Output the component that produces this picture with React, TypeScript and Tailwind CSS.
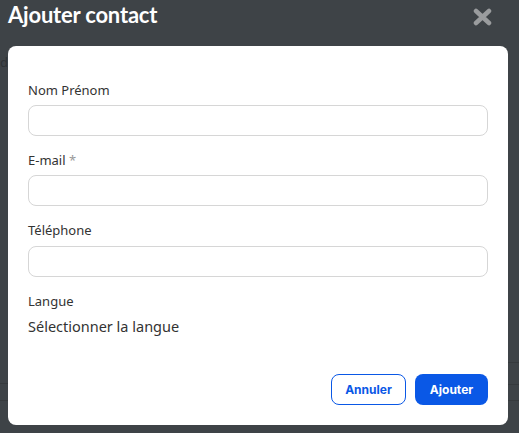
export default function App() {
  return (
    <div className="relative w-[519px] h-[433px] overflow-hidden bg-[#3e4347] font-['Noto_Sans',sans-serif]">
      {/* faint background behind overlay */}
      <div className="absolute left-0 top-[56px] text-[13px] text-[#2f3336] leading-none">de</div>
      <div className="absolute left-0 top-[383px] w-[8px] h-px bg-[#363a3d]" />
      <div className="absolute left-0 top-[400px] w-[8px] h-px bg-[#363a3d]" />
      <div className="absolute right-0 top-[362px] w-[11px] h-px bg-[#363a3d]" />
      <div className="absolute right-0 top-[384px] w-[11px] h-px bg-[#363a3d]" />
      <div className="absolute right-0 top-[400px] w-[11px] h-px bg-[#363a3d]" />

      {/* Header */}
      <div className="relative flex items-center justify-between pl-[8px] pr-[27px] h-[30px]">
        <h2 className="text-white text-[22px] font-bold tracking-[-0.2px] font-['Lato',sans-serif] leading-none">
          Ajouter contact
        </h2>
        <svg width="19" height="18" viewBox="0 0 19 18" className="mt-[3px]">
          <path d="M3 3 L16 15 M16 3 L3 15" stroke="#9a9c9e" strokeWidth="4.5" strokeLinecap="round" />
        </svg>
      </div>

      {/* Modal */}
      <div className="relative mx-[8px] mt-[16px] w-[500px] h-[379px] bg-white rounded-lg px-[20px] pt-[34px] pb-[20px] flex flex-col">
        <label className="text-[13px] leading-[20px] text-[#333]">Nom Prénom</label>
        <div className="mt-[5px] h-[31px] rounded-lg border border-[#d6d6d6]" />

        <label className="mt-[14px] text-[13px] leading-[20px] text-[#333]">
          E-mail <span className="text-[#999]">*</span>
        </label>
        <div className="mt-[5px] h-[31px] rounded-lg border border-[#d6d6d6]" />

        <label className="mt-[14px] text-[13px] leading-[20px] text-[#333]">Téléphone</label>
        <div className="mt-[6px] h-[31px] rounded-lg border border-[#d6d6d6]" />

        <label className="mt-[14px] text-[13px] leading-[20px] text-[#333]">Langue</label>
        <div className="mt-[5px] text-[14.5px] leading-[20px] text-[#333]">Sélectionner la langue</div>

        <div className="mt-auto flex justify-end gap-[9px]">
          <button className="w-[75px] h-[31px] rounded-lg border border-[#0a58e6] text-[#0a58e6] text-[12px] font-bold font-['Inter',sans-serif]">
            Annuler
          </button>
          <button className="w-[73px] h-[31px] rounded-lg bg-[#0a58e6] text-white text-[12px] font-bold font-['Inter',sans-serif]">
            Ajouter
          </button>
        </div>
      </div>
    </div>
  );
}
